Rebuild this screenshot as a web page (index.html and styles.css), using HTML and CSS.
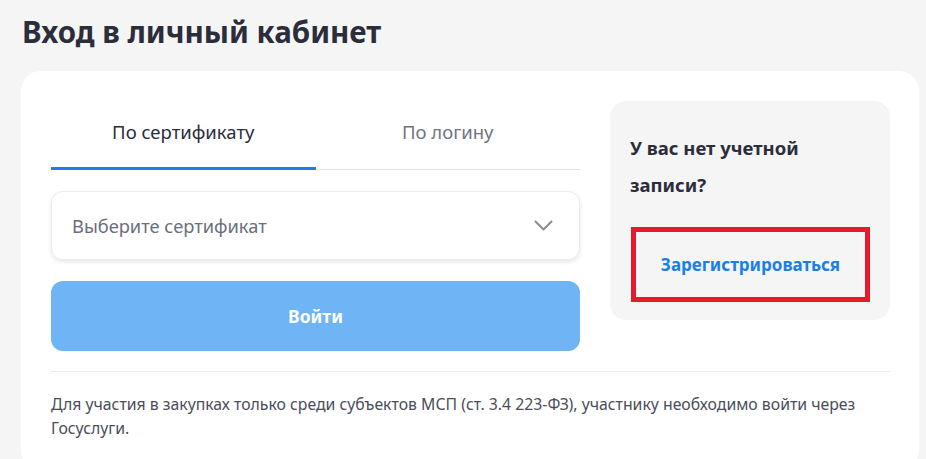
FILE: index.html
```html
<!DOCTYPE html>
<html lang="ru">
<head>
    <meta charset="UTF-8">
    <meta name="viewport" content="width=device-width, initial-scale=1.0">
    <title>Вход в личный кабинет</title>
    <link rel="stylesheet" href="styles.css">
</head>
<body>

<h1 class="page-title">Вход в личный кабинет</h1>

<div class="login-card">
    <div class="login-row">
        <div class="login-form">
            <div class="tabs">
                <div class="tab active">По сертификату</div>
                <div class="tab">По логину</div>
            </div>
            <div class="select">
                <span class="select-placeholder">Выберите сертификат</span>
                <svg class="select-arrow" width="19" height="11" viewBox="0 0 19 11">
                    <path d="M1.5 1.5l8 8 8-8" fill="none" stroke="#8a8c96" stroke-width="2" stroke-linecap="round" stroke-linejoin="round"/>
                </svg>
            </div>
            <button class="login-btn">Войти</button>
        </div>

        <div class="register-box">
            <p class="register-text">У вас нет учетной записи?</p>
            <div class="register-link-wrap">
                <a class="register-link" href="#">Зарегистрироваться</a>
            </div>
        </div>
    </div>

    <div class="login-note">
        Для участия в закупках только среди субъектов МСП (ст. 3.4 223-ФЗ), участнику необходимо войти через Госуслуги.
    </div>
</div>

</body>
</html>
```

FILE: styles.css
```css
body {
    font-family: "Noto Sans", Arial, sans-serif;
    margin: 0;
    padding: 0 0 0 21px;
    background-color: #f5f5f5;
    color: #2b2d3b;
}
.page-title {
    margin: 0;
    padding: 12px 0 0 1px;
    height: 71px;
    box-sizing: border-box;
    font-size: 29.5px;
    font-weight: 700;
    line-height: 40px;
    color: #2b2d3b;
}
.login-card {
    width: 898px;
    background-color: #fff;
    border-radius: 20px;
    padding: 30px 29px 30px 30px;
    box-sizing: border-box;
}
.login-row {
    display: flex;
    gap: 30px;
}
.login-form {
    width: 529px;
}
.tabs {
    display: flex;
}
.tab {
    flex: 1;
    height: 69px;
    box-sizing: border-box;
    padding-top: 18px;
    text-align: center;
    font-size: 18.5px;
    color: #72757f;
    border-bottom: 1px solid #e6e6e9;
}
.tab.active {
    color: #2b2d3b;
    border-bottom: 3px solid #1a7fe8;
}
.select {
    margin-top: 21px;
    height: 69px;
    box-sizing: border-box;
    border: 1px solid #ececee;
    border-radius: 12px;
    box-shadow: 0 2px 4px rgba(0, 0, 0, 0.1);
    display: flex;
    align-items: center;
    justify-content: space-between;
    padding: 0 26px 0 20px;
}
.select-placeholder {
    font-size: 18.3px;
    color: #6b6e7d;
}
.login-btn {
    margin-top: 21px;
    width: 100%;
    height: 70px;
    border: none;
    border-radius: 12px;
    background-color: #6fb5f5;
    color: #fff;
    font-family: inherit;
    font-size: 17.5px;
    font-weight: 700;
    cursor: pointer;
}
.register-box {
    width: 280px;
    height: 219px;
    box-sizing: border-box;
    background-color: #f5f5f5;
    border-radius: 16px;
    padding: 28px 20px 0 20px;
}
.register-text {
    margin: 0;
    font-size: 18.5px;
    font-weight: 700;
    line-height: 37px;
    width: 200px;
}
.register-link-wrap {
    margin-top: 24px;
    margin-left: 1px;
    height: 75px;
    box-sizing: border-box;
    border: 5px solid #e8192c;
    display: flex;
    align-items: center;
    justify-content: center;
}
.register-link {
    color: #1a7fe8;
    font-size: 17px;
    font-weight: 700;
    text-decoration: none;
}
.login-note {
    margin-top: 20px;
    border-top: 1px solid #ececee;
    padding-top: 20px;
    font-size: 15.8px;
    line-height: 24px;
    color: #4b4d5a;
}
```
